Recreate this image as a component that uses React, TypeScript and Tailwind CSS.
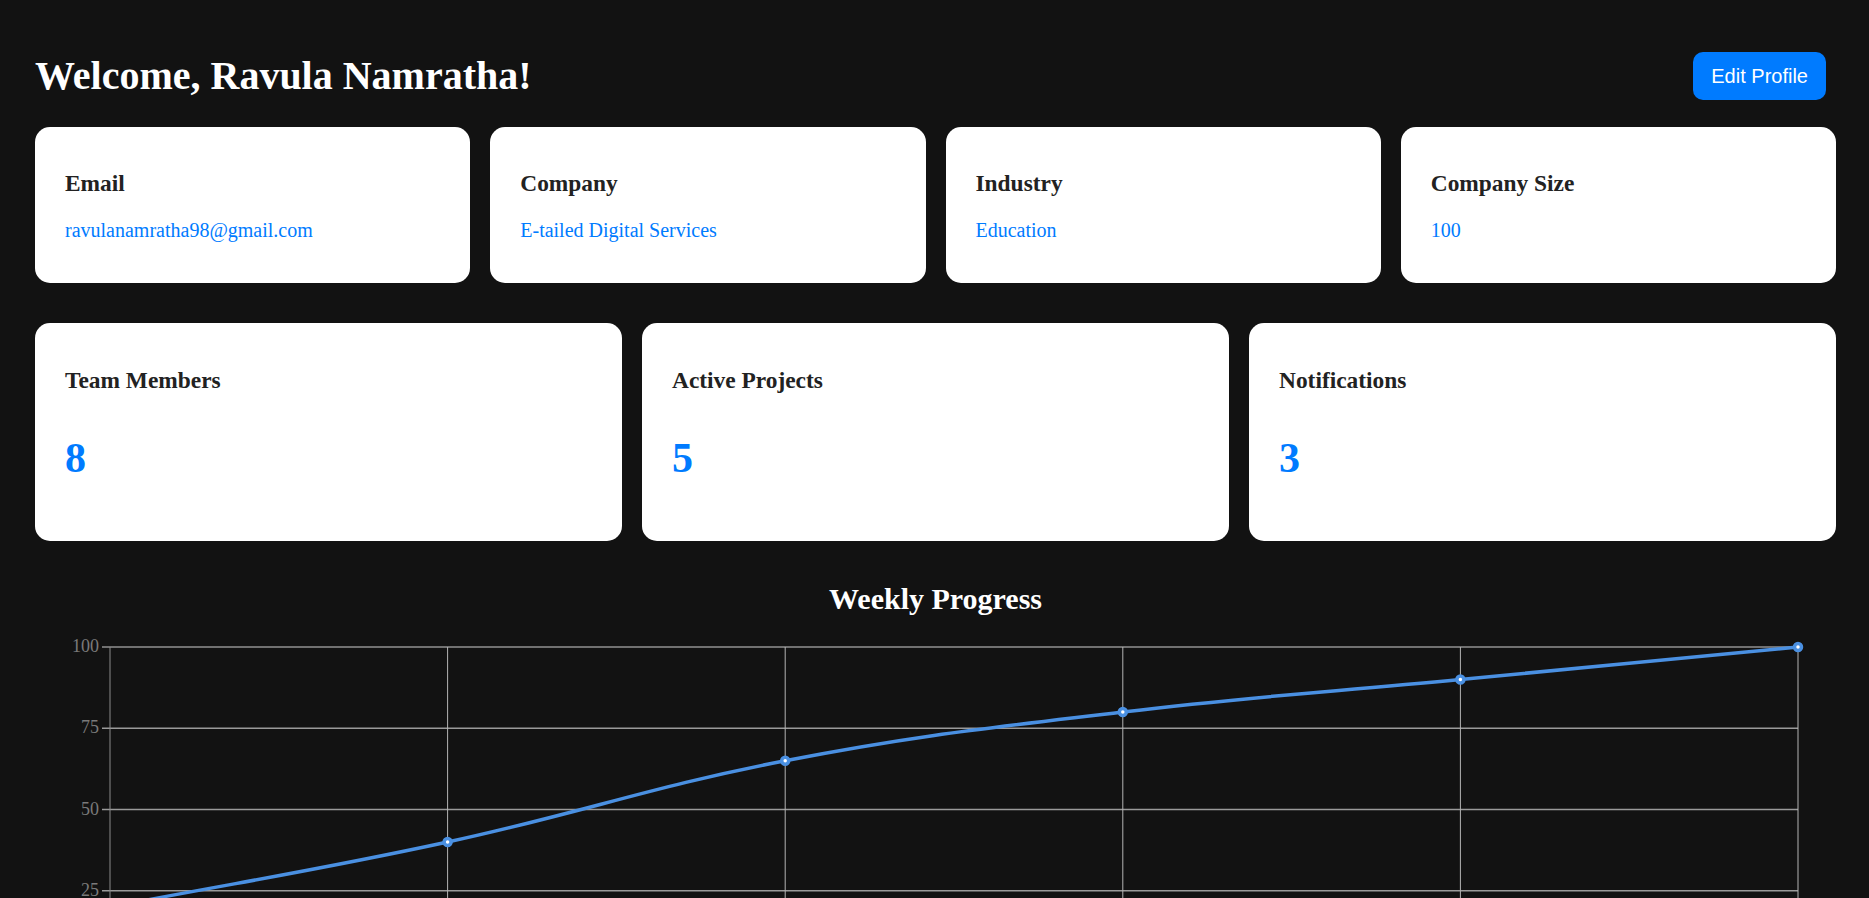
import React from 'react';

const infoCards = [
  { label: 'Email', value: 'ravulanamratha98@gmail.com' },
  { label: 'Company', value: 'E-tailed Digital Services' },
  { label: 'Industry', value: 'Education' },
  { label: 'Company Size', value: '100' },
];

const statCards = [
  { label: 'Team Members', value: 8 },
  { label: 'Active Projects', value: 5 },
  { label: 'Notifications', value: 3 },
];

const progress = [20, 40, 65, 80, 90, 100];
const weeks = ['Week 1', 'Week 2', 'Week 3', 'Week 4', 'Week 5', 'Week 6'];

// chart geometry (px, inside the svg)
const W = 1801;
const H = 420;
const left = 75;
const right = 1763;
const top = 31;
const bottom = 356;

function xAt(i: number) {
  return left + ((right - left) * i) / (progress.length - 1);
}
function yAt(v: number) {
  return bottom - ((bottom - top) * v) / 100;
}

// same idea as chart.js cubic interpolation with tension 0.4
function buildPath(pts: { x: number; y: number }[], tension = 0.4) {
  const cps = pts.map((cur, i) => {
    const prev = pts[i - 1] ?? cur;
    const next = pts[i + 1] ?? cur;
    const d01 = Math.hypot(cur.x - prev.x, cur.y - prev.y);
    const d12 = Math.hypot(next.x - cur.x, next.y - cur.y);
    let s01 = d01 / (d01 + d12);
    let s12 = d12 / (d01 + d12);
    if (isNaN(s01)) s01 = 0;
    if (isNaN(s12)) s12 = 0;
    const fa = tension * s01;
    const fb = tension * s12;
    return {
      prev: { x: cur.x - fa * (next.x - prev.x), y: cur.y - fa * (next.y - prev.y) },
      next: { x: cur.x + fb * (next.x - prev.x), y: cur.y + fb * (next.y - prev.y) },
    };
  });
  let d = `M ${pts[0].x} ${pts[0].y}`;
  for (let i = 1; i < pts.length; i++) {
    const a = cps[i - 1].next;
    const b = cps[i].prev;
    d += ` C ${a.x} ${a.y} ${b.x} ${b.y} ${pts[i].x} ${pts[i].y}`;
  }
  return d;
}

function ProgressChart() {
  const pts = progress.map((v, i) => ({ x: xAt(i), y: yAt(v) }));
  const ticks = [0, 25, 50, 75, 100];

  return (
    <svg width={W} height={H} viewBox={`0 0 ${W} ${H}`} className="block w-full">
      {/* horizontal grid */}
      {ticks.map(t => (
        <g key={t}>
          <line
            x1={left - 8}
            x2={right}
            y1={yAt(t)}
            y2={yAt(t)}
            stroke={t === 100 ? '#cfcfcf' : '#9a9a9a'}
            strokeWidth={t === 100 ? 1 : 1.4}
          />
          <text
            x={left - 11}
            y={yAt(t) + 1}
            textAnchor="end"
            dominantBaseline="middle"
            fontFamily="'Liberation Serif', serif"
            fontSize={18}
            fill="#7a7a7a"
          >
            {t}
          </text>
        </g>
      ))}
      {/* vertical grid */}
      {progress.map((_, i) => (
        <g key={i}>
          <line
            x1={xAt(i)}
            x2={xAt(i)}
            y1={top}
            y2={bottom + 8}
            stroke={i === 0 ? '#8a8a8a' : '#b4b4b4'}
            strokeWidth={1}
          />
          <text
            x={xAt(i)}
            y={bottom + 26}
            textAnchor="middle"
            fontFamily="'Liberation Serif', serif"
            fontSize={18}
            fill="#7a7a7a"
          >
            {weeks[i]}
          </text>
        </g>
      ))}
      <path d={buildPath(pts)} fill="none" stroke="#4a90e2" strokeWidth={3.5} />
      {pts.map((p, i) => (
        <circle key={i} cx={p.x} cy={p.y} r={3.5} fill="#ffffff" stroke="#4a90e2" strokeWidth={3.5} />
      ))}
    </svg>
  );
}

export default function App() {
  return (
    <div className="min-h-screen bg-[#121212] pl-[35px] pr-[33px] pt-[52px] pb-10 font-['Liberation_Serif',serif]">
      {/* Header */}
      <div className="flex items-center justify-between h-[48px]">
        <h1 className="text-[40px] leading-[46px] font-bold text-white">Welcome, Ravula Namratha!</h1>
        <button className="mr-[10px] h-[48px] px-[18px] rounded-[10px] bg-[#007bff] text-white text-[20px] font-['Liberation_Sans',Arial,sans-serif]">
          Edit Profile
        </button>
      </div>

      {/* Profile info */}
      <div className="grid grid-cols-4 gap-[20px] mt-[27px]">
        {infoCards.map(card => (
          <div key={card.label} className="h-[156px] rounded-[15px] bg-white px-[30px] pt-[43px]">
            <h3 className="text-[23.4px] leading-[27px] font-bold text-[#222]">{card.label}</h3>
            <p className="mt-[22px] text-[20px] leading-[23px] text-[#007bff]">{card.value}</p>
          </div>
        ))}
      </div>

      {/* Stats */}
      <div className="grid grid-cols-3 gap-[20px] mt-[40px]">
        {statCards.map(card => (
          <div key={card.label} className="h-[218px] rounded-[15px] bg-white px-[30px] pt-[44px]">
            <h3 className="text-[23.4px] leading-[27px] font-bold text-[#222]">{card.label}</h3>
            <p className="mt-[40px] text-[42px] leading-[48px] font-bold text-[#007bff]">{card.value}</p>
          </div>
        ))}
      </div>

      {/* Chart */}
      <h2 className="mt-[41px] text-center text-[30px] leading-[34px] font-bold text-white">Weekly Progress</h2>
      <ProgressChart />
    </div>
  );
}
